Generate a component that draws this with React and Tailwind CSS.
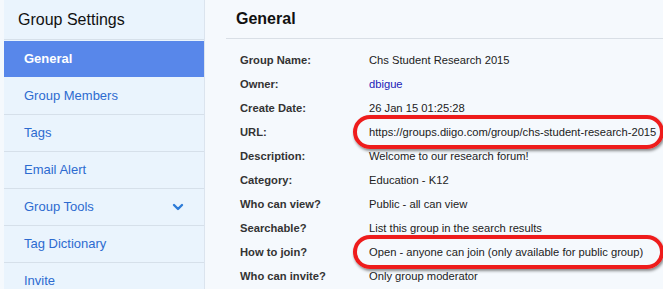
import React from 'react';

const navItems = ['General', 'Group Members', 'Tags', 'Email Alert', 'Group Tools', 'Tag Dictionary', 'Invite'];

const rows = [
  { label: 'Group Name:', value: 'Chs Student Research 2015' },
  { label: 'Owner:', value: 'dbigue', link: true },
  { label: 'Create Date:', value: '26 Jan 15 01:25:28' },
  { label: 'URL:', value: 'https://groups.diigo.com/group/chs-student-research-2015', circle: '-right-[8px]' },
  { label: 'Description:', value: 'Welcome to our research forum!' },
  { label: 'Category:', value: 'Education - K12' },
  { label: 'Who can view?', value: 'Public - all can view' },
  { label: 'Searchable?', value: 'List this group in the search results' },
  { label: 'How to join?', value: 'Open - anyone can join (only available for public group)', circle: '-right-[21px]' },
  { label: 'Who can invite?', value: 'Only group moderator' },
];

export default function App() {
  return (
    <div className="flex h-[289px] w-[663px] overflow-hidden bg-[#f5f9fd] font-['Liberation_Sans',Arial,sans-serif]">
      {/* Sidebar */}
      <div className="ml-[4px] w-[201px] shrink-0 border-r border-[#dbe4ee] bg-[#eaf4fd]">
        <div className="flex h-[40px] items-center border-b border-[#d6e0ea] pl-[14px] text-[16px] text-[#111]">
          Group Settings
        </div>
        <div className="pt-[1px]">
          {navItems.map((item, i) => (
            <div
              key={item}
              className={`flex h-[37px] items-center justify-between border-b pl-[20px] pr-[20px] text-[13px] ${
                i === 0
                  ? 'border-[#eaf4fd] bg-[#5887ea] font-bold text-white'
                  : 'border-[#d6e0ea] text-[#2d6bd0]'
              }`}
            >
              <span>{item}</span>
              {item === 'Group Tools' && (
                <svg width="12" height="8" viewBox="0 0 12 8" fill="none" stroke="#2d7bd8" strokeWidth="2.4" strokeLinecap="round" strokeLinejoin="round">
                  <path d="M2 2l4 4 4-4" />
                </svg>
              )}
            </div>
          ))}
        </div>
      </div>

      {/* Main */}
      <div className="flex-1 pl-[21px]">
        <div className="flex h-[39px] items-center border-b border-[#d9dfe6] pl-[10px] text-[16px] font-bold text-[#111]">
          General
        </div>
        <div className="pt-[9px]">
          {rows.map((r) => (
            <div key={r.label} className="flex h-[24px] items-center text-[11.2px]">
              <div className="w-[143px] shrink-0 pl-[14px] font-bold text-[#333]">{r.label}</div>
              <div className={`relative whitespace-nowrap ${r.link ? 'text-[#2323b8]' : 'text-[#222]'}`}>
                {r.value}
                {r.circle && (
                  <div className={`pointer-events-none absolute -top-[9px] -bottom-[9px] -left-[16px] ${r.circle} rounded-full border-[4px] border-[#ee1c1c] shadow-[1px_2px_3px_rgba(0,0,0,0.45)]`} />
                )}
              </div>
            </div>
          ))}
        </div>
      </div>
    </div>
  );
}
